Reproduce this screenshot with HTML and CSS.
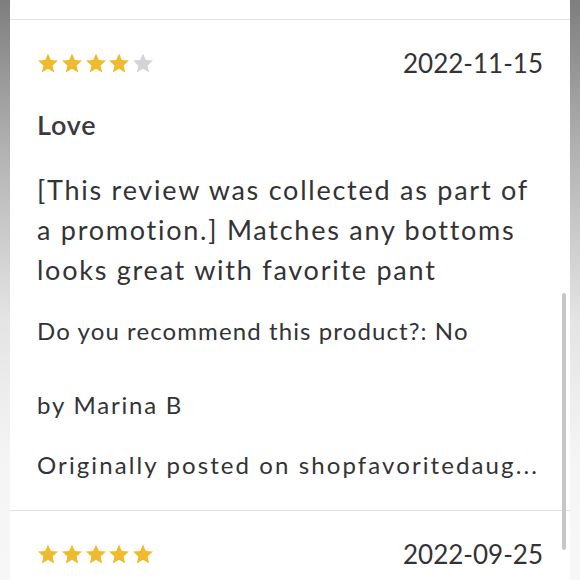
FILE: index.html
```html
<!DOCTYPE html>
<html>
<head>
<meta charset="utf-8">
<link rel="stylesheet" href="styles.css">
</head>
<body>
<div class="frame">
  <div class="side side-left"></div>
  <main class="card">
    <div class="top-gap"></div>
    <section class="review">
      <div class="head">
        <div class="stars">
          <svg class="star on" viewBox="0 0 24 24"><path d="M12 1.5l3.1 7.2 7.8.7-5.9 5.2 1.8 7.7L12 18.3l-6.8 4 1.8-7.7-5.9-5.2 7.8-.7z"/></svg>
          <svg class="star on" viewBox="0 0 24 24"><path d="M12 1.5l3.1 7.2 7.8.7-5.9 5.2 1.8 7.7L12 18.3l-6.8 4 1.8-7.7-5.9-5.2 7.8-.7z"/></svg>
          <svg class="star on" viewBox="0 0 24 24"><path d="M12 1.5l3.1 7.2 7.8.7-5.9 5.2 1.8 7.7L12 18.3l-6.8 4 1.8-7.7-5.9-5.2 7.8-.7z"/></svg>
          <svg class="star on" viewBox="0 0 24 24"><path d="M12 1.5l3.1 7.2 7.8.7-5.9 5.2 1.8 7.7L12 18.3l-6.8 4 1.8-7.7-5.9-5.2 7.8-.7z"/></svg>
          <svg class="star off" viewBox="0 0 24 24"><path d="M12 1.5l3.1 7.2 7.8.7-5.9 5.2 1.8 7.7L12 18.3l-6.8 4 1.8-7.7-5.9-5.2 7.8-.7z"/></svg>
        </div>
        <div class="date">2022-11-15</div>
      </div>
      <h2 class="title">Love</h2>
      <p class="body">[This review was collected as part of a promotion.] Matches any bottoms looks great with favorite pant</p>
      <p class="meta recommend">Do you recommend this product?: No</p>
      <p class="meta author">by Marina B</p>
      <p class="meta source">Originally posted on shopfavoritedaug...</p>
    </section>
    <section class="review">
      <div class="head">
        <div class="stars">
          <svg class="star on" viewBox="0 0 24 24"><path d="M12 1.5l3.1 7.2 7.8.7-5.9 5.2 1.8 7.7L12 18.3l-6.8 4 1.8-7.7-5.9-5.2 7.8-.7z"/></svg>
          <svg class="star on" viewBox="0 0 24 24"><path d="M12 1.5l3.1 7.2 7.8.7-5.9 5.2 1.8 7.7L12 18.3l-6.8 4 1.8-7.7-5.9-5.2 7.8-.7z"/></svg>
          <svg class="star on" viewBox="0 0 24 24"><path d="M12 1.5l3.1 7.2 7.8.7-5.9 5.2 1.8 7.7L12 18.3l-6.8 4 1.8-7.7-5.9-5.2 7.8-.7z"/></svg>
          <svg class="star on" viewBox="0 0 24 24"><path d="M12 1.5l3.1 7.2 7.8.7-5.9 5.2 1.8 7.7L12 18.3l-6.8 4 1.8-7.7-5.9-5.2 7.8-.7z"/></svg>
          <svg class="star on" viewBox="0 0 24 24"><path d="M12 1.5l3.1 7.2 7.8.7-5.9 5.2 1.8 7.7L12 18.3l-6.8 4 1.8-7.7-5.9-5.2 7.8-.7z"/></svg>
        </div>
        <div class="date">2022-09-25</div>
      </div>
    </section>
    <div class="scrollbar"></div>
  </main>
  <div class="side side-right"></div>
</div>
</body>
</html>
```
FILE: styles.css
```css
html, body {
  margin: 0;
  padding: 0;
  width: 580px;
  height: 580px;
  overflow: hidden;
  background: #ffffff;
}
.frame {
  display: flex;
  height: 580px;
}
.side {
  width: 10px;
  flex: none;
  background: linear-gradient(to bottom, #7e7e7e 0%, #b0b0b0 25%, #e4e4e4 55%, #f5f5f5 80%, #f7f7f7 100%);
}
.card {
  position: relative;
  flex: 1;
  background: #ffffff;
  overflow: hidden;
  font-family: Lato, "Open Sans", sans-serif;
  color: #333336;
}
.top-gap {
  height: 19px;
}
.review {
  border-top: 1px solid #e2e2e2;
  padding: 0 27px;
}
.head {
  display: flex;
  justify-content: space-between;
  align-items: center;
  height: 26px;
  margin-top: 30px;
}
.stars {
  display: flex;
  gap: 1.75px;
}
.star {
  width: 22px;
  height: 22px;
}
.star.on { fill: #efbb2c; }
.star.off { fill: #d4d4d4; }
.date {
  font-size: 26px;
  letter-spacing: 0;
}
.title {
  margin: 33px 0 0;
  font-size: 27px;
  font-weight: 600;
  line-height: 32px;
  letter-spacing: 0.8px;
  color: #3a3a3d;
}
.body {
  margin: 29px 0 0;
  font-size: 27px;
  line-height: 40px;
  letter-spacing: 1.75px;
}
.meta {
  font-size: 24px;
  line-height: 30px;
  margin: 0;
}
.recommend { margin-top: 26px; letter-spacing: 1.1px; }
.author { margin-top: 44px; letter-spacing: 1.8px; }
.source { margin-top: 30px; padding-bottom: 30px; letter-spacing: 2.1px; }
.scrollbar {
  position: absolute;
  left: 552px;
  top: 293px;
  width: 4px;
  height: 257px;
  border-radius: 2px;
  background: #c6c6c6;
}
```
